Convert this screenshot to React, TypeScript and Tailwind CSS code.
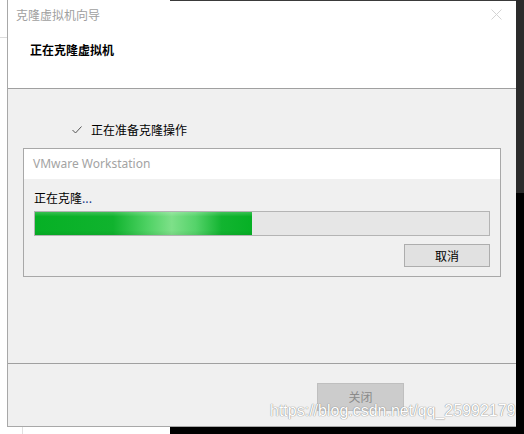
export default function App() {
  const cn = { fontFamily: '"Noto Sans CJK SC", "Noto Sans", sans-serif' };
  return (
    <div className="relative grid h-[434px] w-[524px] grid-cols-[7px_509px_8px] grid-rows-[427px_7px] overflow-hidden bg-white" style={cn}>
      {/* left gutter */}
      <div className="bg-white pt-[37px]">
        <div className="h-px bg-[#dcdcdc]" />
      </div>

      {/* dialog */}
      <div className="flex flex-col border-b border-l border-[#a8a8a8] bg-[#f0f0f0]">
        {/* title bar */}
        <div className="flex h-[30px] shrink-0 items-center justify-between bg-white pl-[8px] pr-[14px]">
          <span className="text-[12px] text-[#a0a0a0]">克隆虚拟机向导</span>
          <svg width="11" height="11" viewBox="0 0 11 11" className="mt-[-2px]">
            <path d="M0.5 0.5L10.5 10.5M10.5 0.5L0.5 10.5" stroke="#d4d4d4" strokeWidth="1" />
          </svg>
        </div>
        {/* header */}
        <div className="h-[59px] shrink-0 border-b border-[#a0a0a0] bg-white pl-[22px] pt-[6px]">
          <span className="text-[12px] font-bold text-black">正在克隆虚拟机</span>
        </div>

        {/* body */}
        <div className="flex h-[275px] shrink-0 flex-col border-b border-[#a0a0a0]">
          <div className="flex items-center gap-[9px] pl-[64px] pt-[32px]">
            <svg width="10" height="8" viewBox="0 0 10 8">
              <path d="M0.5 4L3.5 7L9.5 0.5" stroke="#555" strokeWidth="1" fill="none" />
            </svg>
            <span className="text-[12px] text-black">正在准备克隆操作</span>
          </div>

          <div className="ml-[15px] mt-[9px] flex h-[129px] w-[478px] flex-col border border-[#a8a8a8]">
            <div className="flex h-[30px] items-center bg-white pl-[9px]">
              <span className="text-[12px] text-[#a3a3a3]" style={{ fontFamily: '"Noto Sans", sans-serif' }}>
                VMware Workstation
              </span>
            </div>
            <div className="flex flex-col px-[10px] pt-[10px]">
              <span className="text-[12px] leading-[18px] text-black">
                正在克隆<span className="text-[#1c3c8c]">...</span>
              </span>
              <div className="mt-[4px] h-[25px] w-[456px] border border-[#b4b4b4] bg-[#e6e6e6]">
                <div className="relative h-full w-[217px] bg-[linear-gradient(90deg,#06b025_0%,#10b32e_36%,#4fd264_52%,#7ee089_63%,#55d36a_74%,#12b430_86%,#06b025_100%)]">
                  <div className="absolute inset-0 bg-[linear-gradient(180deg,rgba(255,255,255,0.2)_0%,rgba(255,255,255,0)_20%,rgba(255,255,255,0)_80%,rgba(0,0,0,0.06)_100%)]" />
                </div>
              </div>
              <div className="mt-[8px] flex justify-end">
                <button className="flex h-[23px] w-[86px] items-center justify-center border border-[#adadad] bg-[#e1e1e1] text-[12px] text-black">
                  取消
                </button>
              </div>
            </div>
          </div>
        </div>

        {/* footer */}
        <div className="flex flex-1 pl-[309px] pt-[19px]">
          <div className="flex h-[28px] w-[87px] items-center justify-center border border-[#bfbfbf] bg-[#cccccc] text-[12px] text-[#8a8a8a]">
            关闭
          </div>
        </div>
      </div>

      {/* right gutter */}
      <div className="row-span-2 flex flex-col bg-black">
        <div className="h-[193px] bg-[#2b2b2b]" />
      </div>

      {/* bottom strip */}
      <div className="col-span-2 flex">
        <div className="w-[170px] bg-white pl-[22px]">
          <div className="h-full w-px bg-[#e0e0e0]" />
        </div>
        <div className="flex-1 bg-black" />
      </div>

      {/* top dark edge */}
      <div className="absolute left-[170px] top-0 h-px w-[346px] bg-[#3a3a3a]" />

      {/* watermark */}
      <div
        className="absolute left-[270px] top-[401px] text-[16px] leading-[20px] text-white"
        style={{ fontFamily: '"Liberation Sans", Arial, sans-serif', textShadow: "0 0 1px #888, 0 0 1px #888" }}
      >
        https://blog.csdn.net/qq_25992179
      </div>
    </div>
  );
}
